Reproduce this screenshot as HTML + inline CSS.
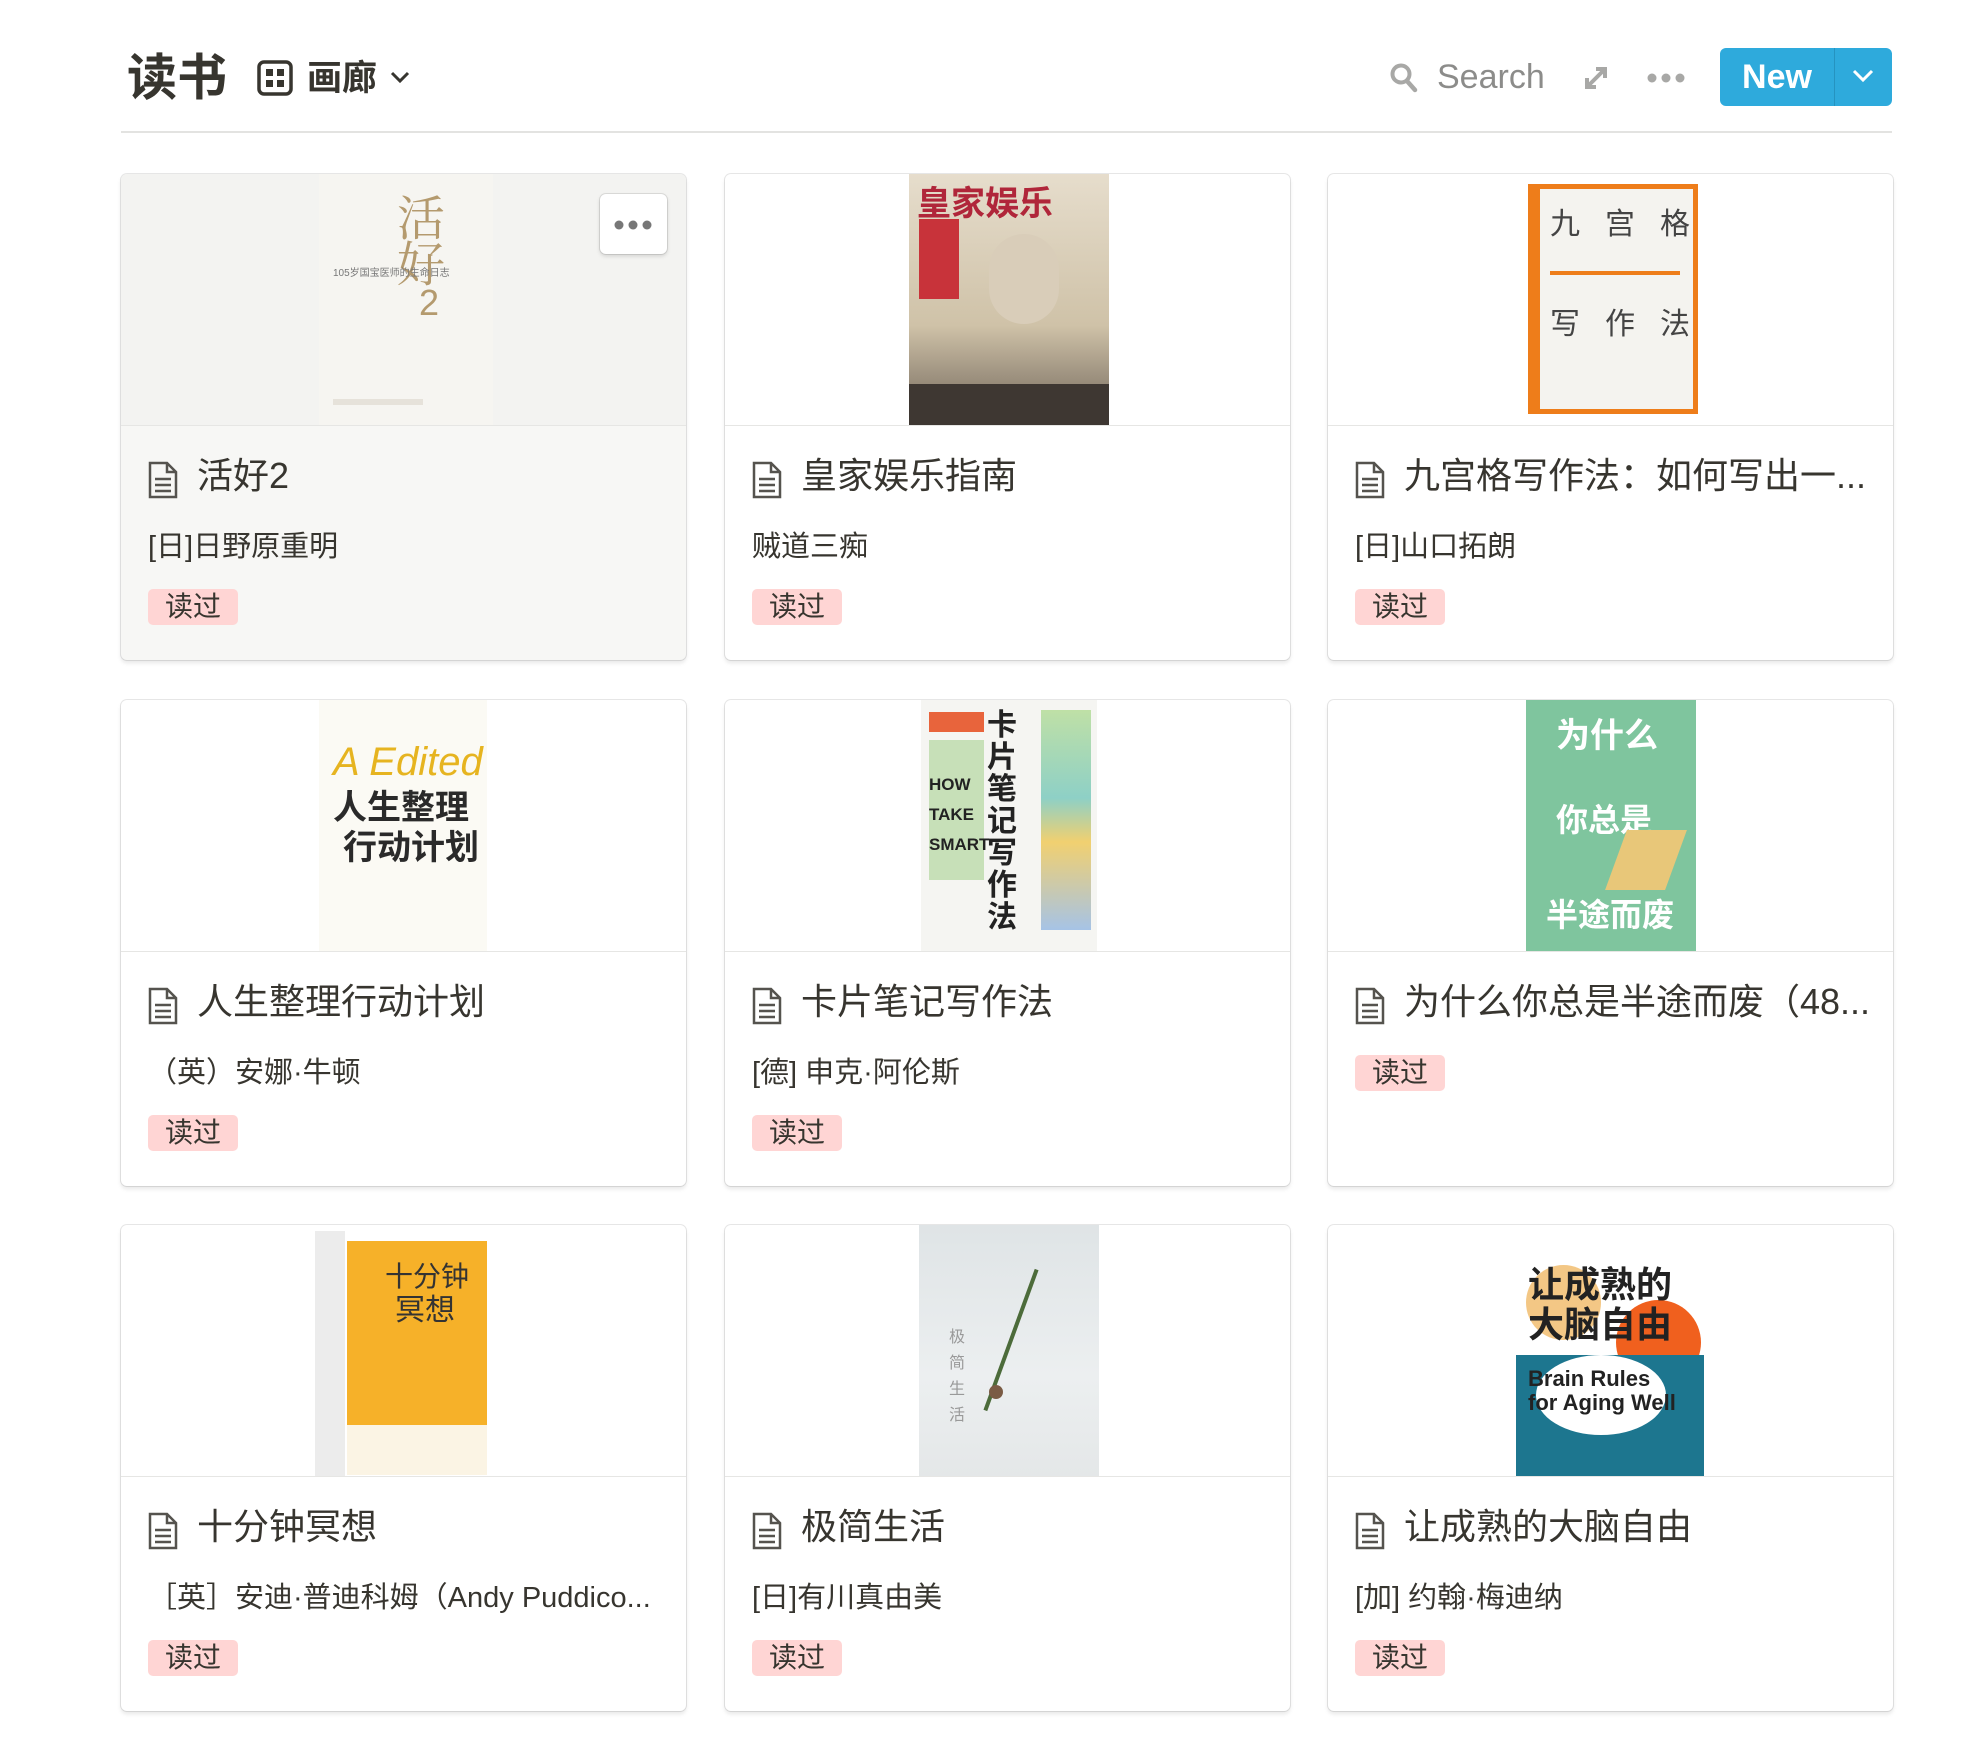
<!DOCTYPE html>
<html><head><meta charset="utf-8">
<style>
*{margin:0;padding:0;box-sizing:border-box}
body{width:1976px;height:1750px;background:#fff;position:relative;overflow:hidden;font-family:"Liberation Sans","Noto Sans CJK SC",sans-serif;color:#37352f}
.a{position:absolute}
.card{position:absolute;width:565px;height:486px;border-radius:6px;box-shadow:0 0 0 1px rgba(15,15,15,0.1),0 3px 4px rgba(15,15,15,0.1);background:#fff;overflow:hidden}
.img{position:absolute;left:0;top:0;width:100%;height:252px;border-bottom:1px solid #e6e6e4;overflow:hidden}
.cov{position:absolute;top:0;height:252px;overflow:hidden}
.t{position:absolute;left:76px;top:280px;font-size:36px;line-height:44px;white-space:nowrap;color:#37352f}
.ic{position:absolute;left:27px;top:287px}
.au{position:absolute;left:27px;top:355px;font-size:29px;line-height:36px;white-space:nowrap;color:#37352f}
.tag{position:absolute;left:27px;width:90px;height:36px;border-radius:5px;background:#ffd5d4;font-size:28px;line-height:36px;text-align:center;color:#37352f}
</style></head><body>
<div class="a" style="left:127px;top:48px;font-size:50px;font-weight:bold;line-height:60px">读书</div>
<svg class="a" style="left:257px;top:60px" width="36" height="36" viewBox="0 0 36 36"><rect x="2" y="2" width="32" height="32" rx="5" fill="none" stroke="#37352f" stroke-width="3.5"/><rect x="9" y="9" width="7" height="7" fill="#37352f"/><rect x="20" y="9" width="7" height="7" fill="#37352f"/><rect x="9" y="20" width="7" height="7" fill="#37352f"/><rect x="20" y="20" width="7" height="7" fill="#37352f"/></svg>
<div class="a" style="left:307px;top:58px;font-size:35px;font-weight:bold;line-height:42px">画廊</div>
<svg class="a" style="left:389px;top:70px" width="22" height="14" viewBox="0 0 22 14"><path d="M3 3l8 8 8-8" fill="none" stroke="#37352f" stroke-width="3"/></svg>
<svg class="a" style="left:1389px;top:62px" width="30" height="32" viewBox="0 0 30 32"><circle cx="12" cy="12" r="8.5" fill="none" stroke="#a8a8a6" stroke-width="4"/><path d="M18 19l8 9" stroke="#a8a8a6" stroke-width="4.5" stroke-linecap="round"/></svg>
<div class="a" style="left:1437px;top:56px;font-size:34px;line-height:42px;color:#8c8c8a">Search</div>
<svg class="a" style="left:1582px;top:64px" width="28" height="28" viewBox="0 0 28 28"><path d="M5 23L23 5M14 5h9v9M5 14v9h9" fill="none" stroke="#a8a8a6" stroke-width="4"/></svg>
<svg class="a" style="left:1646px;top:72px" width="40" height="12"><circle cx="6" cy="6" r="4.5" fill="#a8a8a6"/><circle cx="20" cy="6" r="4.5" fill="#a8a8a6"/><circle cx="34" cy="6" r="4.5" fill="#a8a8a6"/></svg>
<div class="a" style="left:1720px;top:48px;width:172px;height:58px;border-radius:6px;background:#2eaadc"></div>
<div class="a" style="left:1834px;top:48px;width:1px;height:58px;background:#2593c0"></div>
<div class="a" style="left:1720px;top:52px;width:114px;text-align:center;font-size:34px;font-weight:bold;color:#fff;line-height:50px">New</div>
<svg class="a" style="left:1851px;top:68px" width="24" height="16"><path d="M3 3l9 9 9-9" fill="none" stroke="#fff" stroke-width="3"/></svg>
<div class="a" style="left:121px;top:131px;width:1771px;height:2px;background:#e3e3e1"></div>

<!-- row 1 -->
<div class="card" style="left:121px;top:174px;background:#f7f7f5">
 <div class="img" style="background:#f3f3f1"><div class="cov" style="left:198px;width:174px;background:#f6f5f1"><div class="a" style="left:78px;top:18px;font-size:48px;line-height:46px;width:50px;color:#b49a6e;font-family:'Noto Serif CJK SC',serif">活好</div><div class="a" style="left:100px;top:108px;font-size:36px;color:#b49a6e">2</div><div class="a" style="left:14px;top:90px;font-size:10px;color:#777">105岁国宝医师的生命日志</div><div class="a" style="left:14px;top:225px;width:90px;height:6px;background:#e6e2da"></div></div>
 <div class="a" style="left:479px;top:20px;width:67px;height:60px;border-radius:6px;background:#fff;box-shadow:0 0 0 1px rgba(15,15,15,.1),0 2px 4px rgba(15,15,15,.15)"></div>
 <svg class="a" style="left:492px;top:45px" width="40" height="12"><circle cx="6" cy="6" r="4.5" fill="#777"/><circle cx="20" cy="6" r="4.5" fill="#777"/><circle cx="34" cy="6" r="4.5" fill="#777"/></svg></div>
 <svg class="ic" width="30" height="38" viewBox="0 0 30 38"><path d="M2 2h17l9 9v25H2z M19 2v9h9" fill="none" stroke="#55534e" stroke-width="2.5"/><path d="M7 18h16M7 24h16M7 30h16" stroke="#55534e" stroke-width="2.5"/></svg>
 <div class="t">活好2</div><div class="au">[日]日野原重明</div><div class="tag" style="top:415px">读过</div>
</div>
<div class="card" style="left:725px;top:174px">
 <div class="img"><div class="cov" style="left:184px;width:200px;background:linear-gradient(180deg,#e6ddcc,#cfc2a8 60%,#6e6358)"><div class="a" style="left:8px;top:2px;font-size:34px;color:#b0263a;font-weight:bold">皇家娱乐</div><div class="a" style="left:10px;top:45px;width:40px;height:80px;background:#c8333a"></div><div class="a" style="left:80px;top:60px;width:70px;height:90px;border-radius:40px;background:#d9cdb9"></div><div class="a" style="left:0;top:210px;width:200px;height:43px;background:#3e3732"></div></div></div>
 <svg class="ic" width="30" height="38" viewBox="0 0 30 38"><path d="M2 2h17l9 9v25H2z M19 2v9h9" fill="none" stroke="#55534e" stroke-width="2.5"/><path d="M7 18h16M7 24h16M7 30h16" stroke="#55534e" stroke-width="2.5"/></svg>
 <div class="t">皇家娱乐指南</div><div class="au">贼道三痴</div><div class="tag" style="top:415px">读过</div>
</div>
<div class="card" style="left:1328px;top:174px">
 <div class="img"><div class="cov" style="left:200px;top:10px;height:230px;width:170px;background:#f4f3ef;border:5px solid #ee7d1a;border-left-width:12px"><div class="a" style="left:10px;top:10px;font-size:30px;width:140px;display:flex;justify-content:space-between;color:#444"><span>九</span><span>宫</span><span>格</span></div><div class="a" style="left:10px;top:110px;font-size:30px;width:140px;display:flex;justify-content:space-between;color:#444"><span>写</span><span>作</span><span>法</span></div><div class="a" style="left:10px;top:82px;width:130px;height:4px;background:#ee7d1a"></div></div></div>
 <svg class="ic" width="30" height="38" viewBox="0 0 30 38"><path d="M2 2h17l9 9v25H2z M19 2v9h9" fill="none" stroke="#55534e" stroke-width="2.5"/><path d="M7 18h16M7 24h16M7 30h16" stroke="#55534e" stroke-width="2.5"/></svg>
 <div class="t">九宫格写作法：如何写出一...</div><div class="au">[日]山口拓朗</div><div class="tag" style="top:415px">读过</div>
</div>

<!-- row 2 -->
<div class="card" style="left:121px;top:700px">
 <div class="img"><div class="cov" style="left:198px;width:168px;background:#fbfaf4"><div class="a" style="left:14px;top:40px;font-size:40px;color:#e6b420;font-style:italic">A Edited</div><div class="a" style="left:14px;top:80px;font-size:34px;font-weight:bold;color:#2a2a2a">人生整理</div><div class="a" style="left:24px;top:120px;font-size:34px;font-weight:bold;color:#2a2a2a">行动计划</div></div></div>
 <svg class="ic" width="30" height="38" viewBox="0 0 30 38"><path d="M2 2h17l9 9v25H2z M19 2v9h9" fill="none" stroke="#55534e" stroke-width="2.5"/><path d="M7 18h16M7 24h16M7 30h16" stroke="#55534e" stroke-width="2.5"/></svg>
 <div class="t">人生整理行动计划</div><div class="au">（英）安娜·牛顿</div><div class="tag" style="top:415px">读过</div>
</div>
<div class="card" style="left:725px;top:700px">
 <div class="img"><div class="cov" style="left:196px;width:176px;background:#f5f5f2"><div class="a" style="left:8px;top:12px;width:55px;height:20px;background:#e8643c"></div><div class="a" style="left:8px;top:40px;width:55px;height:140px;background:#c7e0b8"></div><div class="a" style="left:8px;top:70px;font-size:17px;font-weight:bold;color:#222;line-height:30px">HOW<br>TAKE<br>SMART</div><div class="a" style="left:66px;top:10px;font-size:30px;font-weight:bold;color:#222;width:32px;line-height:32px">卡片笔记写作法</div><div class="a" style="left:120px;top:10px;width:50px;height:220px;background:linear-gradient(#bfe0a6,#8ed0c6 40%,#f1d070 60%,#a6c3e6)"></div></div></div>
 <svg class="ic" width="30" height="38" viewBox="0 0 30 38"><path d="M2 2h17l9 9v25H2z M19 2v9h9" fill="none" stroke="#55534e" stroke-width="2.5"/><path d="M7 18h16M7 24h16M7 30h16" stroke="#55534e" stroke-width="2.5"/></svg>
 <div class="t">卡片笔记写作法</div><div class="au">[德] 申克·阿伦斯</div><div class="tag" style="top:415px">读过</div>
</div>
<div class="card" style="left:1328px;top:700px">
 <div class="img"><div class="cov" style="left:198px;width:170px;background:#7fc59e"><div class="a" style="left:30px;top:8px;font-size:34px;font-weight:bold;color:#fff">为什么</div><div class="a" style="left:30px;top:95px;font-size:32px;font-weight:bold;color:#fff">你总是</div><div class="a" style="left:20px;top:190px;font-size:32px;font-weight:bold;color:#fff">半途而废</div><div class="a" style="left:90px;top:130px;width:60px;height:60px;background:#e8c779;transform:skewX(-20deg)"></div></div></div>
 <svg class="ic" width="30" height="38" viewBox="0 0 30 38"><path d="M2 2h17l9 9v25H2z M19 2v9h9" fill="none" stroke="#55534e" stroke-width="2.5"/><path d="M7 18h16M7 24h16M7 30h16" stroke="#55534e" stroke-width="2.5"/></svg>
 <div class="t">为什么你总是半途而废（48...</div><div class="tag" style="top:355px">读过</div>
</div>

<!-- row 3 -->
<div class="card" style="left:121px;top:1225px">
 <div class="img"><div class="cov" style="left:194px;width:178px;background:#fff"><div class="a" style="left:0;top:6px;width:30px;height:245px;background:#ececec"></div><div class="a" style="left:32px;top:16px;width:140px;height:185px;background:#f6b129"></div><div class="a" style="left:70px;top:30px;font-size:28px;color:#333">十分钟</div><div class="a" style="left:80px;top:60px;font-size:30px;color:#333">冥想</div><div class="a" style="left:32px;top:200px;width:140px;height:50px;background:#fbf4e4"></div></div></div>
 <svg class="ic" width="30" height="38" viewBox="0 0 30 38"><path d="M2 2h17l9 9v25H2z M19 2v9h9" fill="none" stroke="#55534e" stroke-width="2.5"/><path d="M7 18h16M7 24h16M7 30h16" stroke="#55534e" stroke-width="2.5"/></svg>
 <div class="t">十分钟冥想</div><div class="au">［英］安迪·普迪科姆（Andy Puddico...</div><div class="tag" style="top:415px">读过</div>
</div>
<div class="card" style="left:725px;top:1225px">
 <div class="img"><div class="cov" style="left:194px;width:180px;background:linear-gradient(180deg,#dfe4e6,#eceff0 60%,#e4e7e8)"><div class="a" style="left:30px;top:100px;font-size:16px;color:#999;line-height:26px;width:20px">极简生活</div><div class="a" style="left:90px;top:40px;width:4px;height:150px;background:#4c6b3a;transform:rotate(20deg)"></div><div class="a" style="left:70px;top:160px;width:14px;height:14px;border-radius:7px;background:#7a5b44"></div></div></div>
 <svg class="ic" width="30" height="38" viewBox="0 0 30 38"><path d="M2 2h17l9 9v25H2z M19 2v9h9" fill="none" stroke="#55534e" stroke-width="2.5"/><path d="M7 18h16M7 24h16M7 30h16" stroke="#55534e" stroke-width="2.5"/></svg>
 <div class="t">极简生活</div><div class="au">[日]有川真由美</div><div class="tag" style="top:415px">读过</div>
</div>
<div class="card" style="left:1328px;top:1225px">
 <div class="img"><div class="cov" style="left:188px;width:188px;background:#fff"><div class="a" style="left:10px;top:40px;width:75px;height:75px;border-radius:40px;background:#f3c785"></div><div class="a" style="left:100px;top:75px;width:85px;height:85px;border-radius:45px;background:#f0601e"></div><div class="a" style="left:0;top:130px;width:188px;height:123px;background:#1d768f"></div><div class="a" style="left:20px;top:130px;width:130px;height:80px;border-radius:50%;background:#fff"></div><div class="a" style="left:12px;top:40px;font-size:36px;font-weight:bold;color:#222;line-height:40px">让成熟的<br>大脑自由</div><div class="a" style="left:12px;top:142px;font-size:22px;font-weight:bold;color:#222;line-height:24px">Brain Rules<br>for Aging Well</div></div></div>
 <svg class="ic" width="30" height="38" viewBox="0 0 30 38"><path d="M2 2h17l9 9v25H2z M19 2v9h9" fill="none" stroke="#55534e" stroke-width="2.5"/><path d="M7 18h16M7 24h16M7 30h16" stroke="#55534e" stroke-width="2.5"/></svg>
 <div class="t">让成熟的大脑自由</div><div class="au">[加] 约翰·梅迪纳</div><div class="tag" style="top:415px">读过</div>
</div>
</body></html>
